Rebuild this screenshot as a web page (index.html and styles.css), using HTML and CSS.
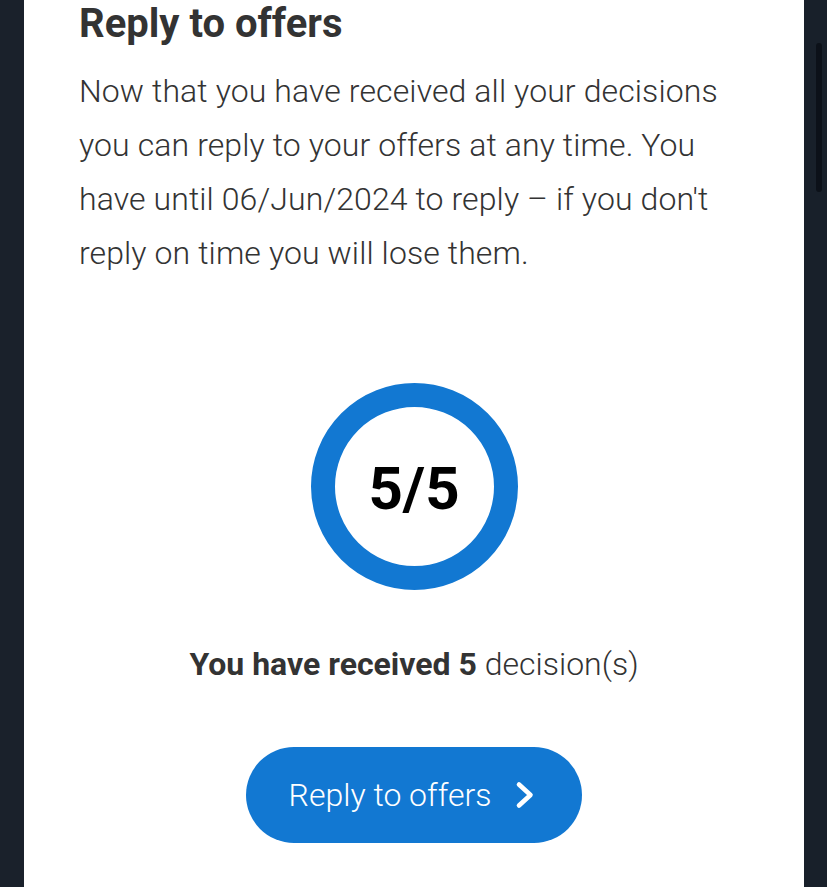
FILE: index.html
```html
<!DOCTYPE html>
<html>
<head>
<meta charset="utf-8">
<link rel="stylesheet" href="styles.css">
</head>
<body>
<div class="frame">
  <main class="card">
    <h1 class="title">Reply to offers</h1>
    <p class="intro">Now that you have received all your decisions you can reply to your offers at any time. You have until 06/Jun/2024 to reply – if you don't reply on time you will lose them.</p>
    <div class="ring-wrap">
      <div class="ring"><span class="ring-text">5/5</span></div>
    </div>
    <p class="count"><strong>You have received 5</strong> decision(s)</p>
    <div class="actions">
      <button class="btn"><span>Reply to offers</span>
        <svg class="chev" width="20" height="28" viewBox="0 0 20 28"><path d="M4 3.5 L15.5 14 L4 24.5" fill="none" stroke="#fff" stroke-width="4.6" stroke-linecap="round" stroke-linejoin="round"/></svg>
      </button>
    </div>
  </main>
  <div class="rail"><div class="thumb"></div></div>
</div>
</body>
</html>
```
FILE: styles.css
```css
html, body {
  margin: 0;
  padding: 0;
  height: 100%;
  overflow: hidden;
}
body {
  background: #1a212b;
  font-family: Roboto, "Liberation Sans", sans-serif;
}
.frame {
  display: flex;
  height: 887px;
  padding-left: 24px;
}
.card {
  width: 780px;
  background: #fff;
  padding: 0 55px;
  box-sizing: border-box;
}
.rail {
  flex: 1;
  position: relative;
  background: #18202a;
}
.thumb {
  position: absolute;
  left: 12px;
  top: 43px;
  width: 6px;
  height: 149px;
  border-radius: 3px;
  background: #0c1119;
}
.title {
  margin: 0;
  font-size: 40px;
  line-height: 48px;
  font-weight: 700;
  color: #333;
}
.intro {
  margin: 16px 0 0;
  font-size: 32px;
  font-weight: 300;
  line-height: 54px;
  color: #333;
  letter-spacing: 0.1px;
}
.ring-wrap {
  display: flex;
  justify-content: center;
  margin-top: 103px;
}
.ring {
  width: 159px;
  height: 159px;
  border: 24px solid #1278d2;
  border-radius: 50%;
  display: flex;
  align-items: center;
  justify-content: center;
}
.ring-text {
  font-size: 60px;
  line-height: 1;
  font-weight: 700;
  color: #000;
  padding-top: 4px;
}
.count {
  margin: 54px 0 0;
  text-align: center;
  font-size: 32px;
  font-weight: 300;
  color: #333;
  line-height: 40px;
}
.count strong { font-weight: 700; }
.actions {
  display: flex;
  justify-content: center;
  margin-top: 63px;
}
.btn {
  width: 336px;
  height: 96px;
  border: none;
  border-radius: 48px;
  background: #1278d2;
  color: #fff;
  font-family: Roboto, "Liberation Sans", sans-serif;
  font-size: 32px;
  font-weight: 300;
  display: flex;
  align-items: center;
  justify-content: center;
  gap: 24px;
  padding: 0 4px 0 0;
}
.chev { display: block; }
```
